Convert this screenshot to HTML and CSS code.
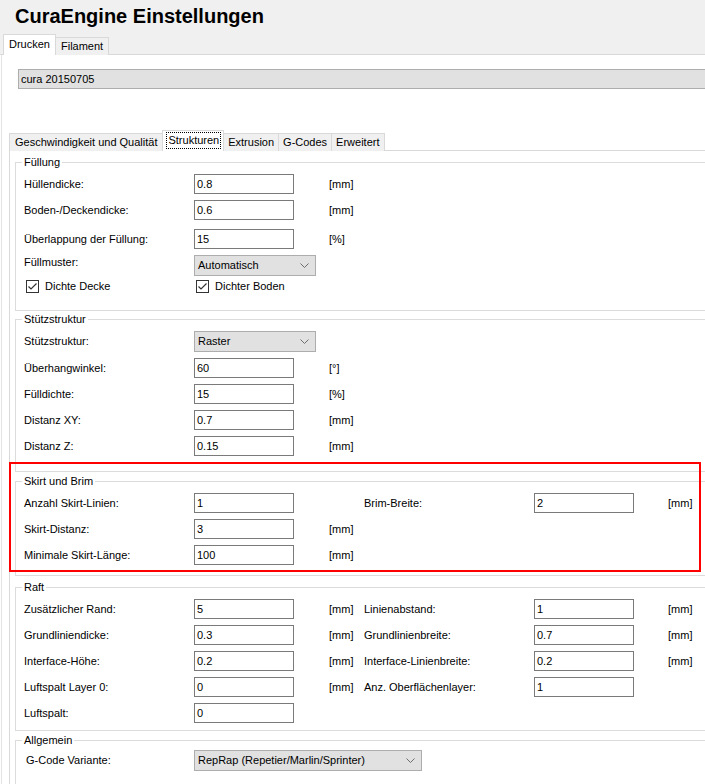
FILE: index.html
```html
<!DOCTYPE html>
<html lang="de">
<head>
<meta charset="utf-8">
<title>CuraEngine Einstellungen</title>
<link rel="stylesheet" href="styles.css">
</head>
<body>
<div class="titlebar"><h1>CuraEngine Einstellungen</h1></div>
<div class="tabs outer-tabs">
  <span class="tab active">Drucken</span>
  <span class="tab">Filament</span>
</div>
<div class="outer-page">
  <div class="combo">cura 20150705</div>
  <div class="tabs inner-tabs">
    <span class="tab first">Geschwindigkeit und Qualität</span>
    <span class="tab active"><span class="focus">Strukturen</span></span>
    <span class="tab">Extrusion</span>
    <span class="tab">G-Codes</span>
    <span class="tab">Erweitert</span>
  </div>
  <div class="inner-page">
    <fieldset class="group g-fill">
      <legend>Füllung</legend>
      <div class="form">
        <div class="row"><span class="lbl">Hüllendicke:</span><span class="input">0.8</span><span class="unit">[mm]</span></div>
        <div class="row"><span class="lbl">Boden-/Deckendicke:</span><span class="input">0.6</span><span class="unit">[mm]</span></div>
        <div class="row row-wide"><span class="lbl">Überlappung der Füllung:</span><span class="input">15</span><span class="unit">[%]</span></div>
        <div class="row row-select"><span class="lbl lbl-high">Füllmuster:</span><span class="select s-short">Automatisch<svg class="chev" width="9" height="5" viewBox="0 0 9 5"><polyline points="0.5,0.5 4.5,4.5 8.5,0.5" fill="none" stroke="#6d6d6d" stroke-width="1"/></svg></span></div>
        <div class="row row-check">
          <label class="check"><span class="box"><svg width="11" height="11" viewBox="0 0 11 11"><polyline points="1.5,5.5 4,8 9.5,2.5" fill="none" stroke="#333" stroke-width="1.2"/></svg></span>Dichte Decke</label>
          <label class="check"><span class="box"><svg width="11" height="11" viewBox="0 0 11 11"><polyline points="1.5,5.5 4,8 9.5,2.5" fill="none" stroke="#333" stroke-width="1.2"/></svg></span>Dichter Boden</label>
        </div>
      </div>
    </fieldset>

    <fieldset class="group g-support">
      <legend>Stützstruktur</legend>
      <div class="form">
        <div class="row row-select"><span class="lbl">Stützstruktur:</span><span class="select s-short">Raster<svg class="chev" width="9" height="5" viewBox="0 0 9 5"><polyline points="0.5,0.5 4.5,4.5 8.5,0.5" fill="none" stroke="#6d6d6d" stroke-width="1"/></svg></span></div>
        <div class="row"><span class="lbl">Überhangwinkel:</span><span class="input">60</span><span class="unit">[°]</span></div>
        <div class="row"><span class="lbl">Fülldichte:</span><span class="input">15</span><span class="unit">[%]</span></div>
        <div class="row"><span class="lbl">Distanz XY:</span><span class="input">0.7</span><span class="unit">[mm]</span></div>
        <div class="row"><span class="lbl">Distanz Z:</span><span class="input">0.15</span><span class="unit">[mm]</span></div>
      </div>
    </fieldset>

    <fieldset class="group g-skirt">
      <legend>Skirt und Brim</legend>
      <div class="form">
        <div class="row"><span class="lbl">Anzahl Skirt-Linien:</span><span class="input">1</span><span class="unit"></span><span class="lbl">Brim-Breite:</span><span class="input">2</span><span class="unit unit2">[mm]</span></div>
        <div class="row"><span class="lbl">Skirt-Distanz:</span><span class="input">3</span><span class="unit">[mm]</span></div>
        <div class="row"><span class="lbl">Minimale Skirt-Länge:</span><span class="input">100</span><span class="unit">[mm]</span></div>
      </div>
    </fieldset>

    <fieldset class="group g-raft">
      <legend>Raft</legend>
      <div class="form">
        <div class="row"><span class="lbl">Zusätzlicher Rand:</span><span class="input">5</span><span class="unit">[mm]</span><span class="lbl">Linienabstand:</span><span class="input">1</span><span class="unit unit2">[mm]</span></div>
        <div class="row"><span class="lbl">Grundliniendicke:</span><span class="input">0.3</span><span class="unit">[mm]</span><span class="lbl">Grundlinienbreite:</span><span class="input">0.7</span><span class="unit unit2">[mm]</span></div>
        <div class="row"><span class="lbl">Interface-Höhe:</span><span class="input">0.2</span><span class="unit">[mm]</span><span class="lbl">Interface-Linienbreite:</span><span class="input">0.2</span><span class="unit unit2">[mm]</span></div>
        <div class="row"><span class="lbl">Luftspalt Layer 0:</span><span class="input">0</span><span class="unit">[mm]</span><span class="lbl">Anz. Oberflächenlayer:</span><span class="input">1</span></div>
        <div class="row"><span class="lbl">Luftspalt:</span><span class="input">0</span></div>
      </div>
    </fieldset>

    <fieldset class="group g-general">
      <legend>Allgemein</legend>
      <div class="form">
        <div class="row row-select"><span class="lbl lbl-indent">G-Code Variante:</span><span class="select s-long">RepRap (Repetier/Marlin/Sprinter)<svg class="chev" width="9" height="5" viewBox="0 0 9 5"><polyline points="0.5,0.5 4.5,4.5 8.5,0.5" fill="none" stroke="#6d6d6d" stroke-width="1"/></svg></span></div>
      </div>
    </fieldset>
  </div>
</div>
<div class="annotation"></div>
</body>
</html>
```

FILE: styles.css
```css
* { box-sizing: border-box; }

html, body {
  margin: 0;
  padding: 0;
  background: #ffffff;
  overflow: hidden;
}

body {
  position: relative;
  width: 705px;
  height: 784px;
  font-family: "Liberation Sans", Arial, sans-serif;
  font-size: 11px;
  line-height: 13px;
  color: #000000;
}

.titlebar {
  height: 34px;
  background: #f0f0f0;
}

.titlebar h1 {
  margin: 0;
  padding: 4px 0 0 15px;
  font-size: 20px;
  line-height: 24px;
  font-weight: bold;
  color: #000;
}

/* tabs */
.tabs {
  display: flex;
  align-items: flex-end;
  height: 21px;
  border-bottom: 1px solid #d9d9d9;
}

.tab {
  display: flex;
  align-items: center;
  height: 18px;
  padding: 0 5px;
  margin-bottom: -1px;
  background: #f0f0f0;
  border: 1px solid #d9d9d9;
  border-bottom: none;
  margin-right: -1px;
  white-space: nowrap;
}

.tab.active {
  height: 21px;
  background: #ffffff;
  position: relative;
  z-index: 1;
}

.outer-tabs {
  background: #f0f0f0;
  padding-left: 3px;
}

.outer-tabs .tab { height: 18px; }
.outer-tabs .tab.active { height: 21px; padding-bottom: 2px; }

.outer-page {
  margin-left: 1px;
  border-left: 1px solid #e3e3e3;
  background: #fff;
  padding-top: 14px;
}

.combo {
  margin-left: 16px;
  margin-right: -20px;
  height: 20px;
  background: #e1e1e1;
  border: 1px solid #adadad;
  padding-left: 2px;
  display: flex;
  align-items: center;
}

.inner-tabs {
  margin-top: 41px;
  margin-left: 7px;
  margin-right: -20px;
  background: #fff;
}

.inner-tabs .tab { height: 18px; padding: 0 4px; }
.inner-tabs .tab.first { padding: 0 5px; }
.inner-tabs .tab.active { height: 21px; padding: 0 2px 1px 3px; }

.focus {
  border: 1px dotted #000;
  padding: 1px 1px;
  line-height: 13px;
}

.inner-page {
  margin-left: 7px;
  border-left: 1px solid #d9d9d9;
  padding: 5px 0 0 5px;
}

/* group boxes */
.group {
  margin: 0 -30px 0 0;
  border: 1px solid #dcdcdc;
  padding: 5px 0 0 6px;
  min-width: 0;
}

.group legend {
  padding: 0 2px;
  font-size: 11px;
  line-height: 13px;
}

.form {
  display: flex;
  flex-direction: column;
  gap: 6px;
  padding-left: 2px;
}

.row {
  display: grid;
  grid-template-columns: 170px 100px 70px 170px 100px auto;
  align-items: center;
  height: 20px;
}

.row-wide { margin-top: 3px; }
.row-select { height: 21px; }
.row-check { height: 13px; margin-top: -2px; }

.lbl { white-space: nowrap; }
.lbl-high { position: relative; top: -3px; }
.lbl-indent { padding-left: 2px; }

.input {
  height: 20px;
  border: 1px solid #7a7a7a;
  background: #fff;
  padding-left: 2px;
  display: flex;
  align-items: center;
}

.unit { padding-left: 35px; white-space: nowrap; }
.unit2 { padding-left: 34px; }

.select {
  height: 21px;
  background: #e1e1e1;
  border: 1px solid #adadad;
  display: flex;
  align-items: center;
  justify-content: space-between;
  padding: 0 6px 0 3px;
  white-space: nowrap;
}

.s-short { width: 122px; }
.s-long { width: 228px; grid-column: 2 / span 3; }

.chev { flex: none; }

.check {
  display: flex;
  align-items: center;
  gap: 6px;
  padding-left: 2px;
  white-space: nowrap;
}

.box {
  width: 13px;
  height: 13px;
  border: 1px solid #333;
  background: #fff;
  display: flex;
  align-items: center;
  justify-content: center;
  flex: none;
}

.g-fill { padding-bottom: 17px; }
.g-support { margin-top: 2px; padding-bottom: 15px; }
.g-skirt { margin-top: 3px; padding-bottom: 10px; }
.g-raft { margin-top: 5px; padding-top: 5px; padding-bottom: 7px; }
.g-general { margin-top: 3px; padding-top: 3px; padding-bottom: 20px; }

/* red highlight annotation over the Skirt group */
.annotation {
  position: absolute;
  left: 9px;
  top: 462px;
  width: 692px;
  height: 110px;
  border: 2px solid #ff0000;
  pointer-events: none;
}
```
